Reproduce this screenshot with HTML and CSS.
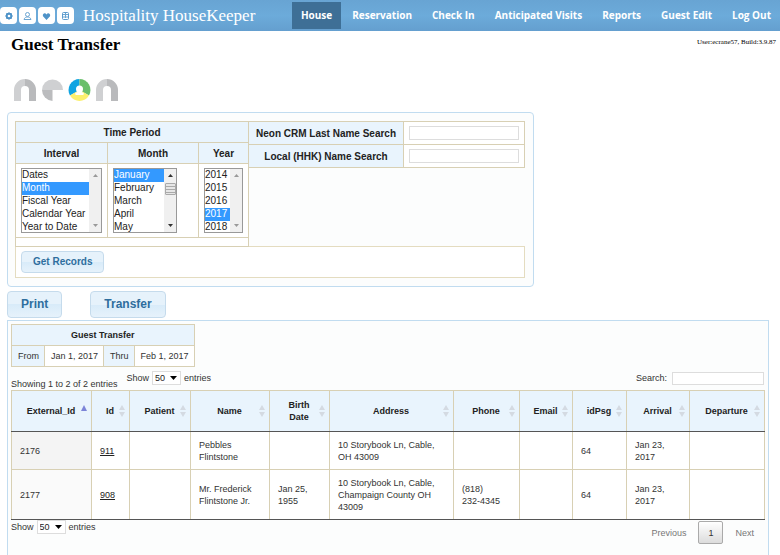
FILE: index.html
```html
<!DOCTYPE html>
<html lang="en">
<head>
<meta charset="utf-8">
<title>Guest Transfer</title>
<link rel="stylesheet" href="styles.css">
</head>
<body>
<svg class="defs" width="0" height="0" aria-hidden="true">
  <symbol id="sort" viewBox="0 0 6 12"><path d="M3 0L6 5H0zM3 12L0 7H6z"/></symbol>
  <symbol id="tri-up" viewBox="0 0 5 3"><path d="M2.500 0L5 3H0z"/></symbol>
  <symbol id="tri-down" viewBox="0 0 7 4"><path d="M0 0H7L3.500 4z"/></symbol>
  <symbol id="tri-asc" viewBox="0 0 6 6"><path d="M3 0L6 6H0z"/></symbol>
</svg>
<header class="topbar">
  <div class="brand">
    <div class="badges">
      <svg class="badge" viewBox="0 0 17 17"><rect width="17" height="17" rx="4" fill="#fff"/><rect x="6" y="6" width="6" height="6" rx="1" fill="#4f93c8"/><path d="M9 5v8M5 9h8" stroke="#4f93c8"/><circle cx="9" cy="9" r="1.300" fill="#fff"/></svg>
      <svg class="badge" viewBox="0 0 17 17"><rect width="17" height="17" rx="4" fill="#fff"/><circle cx="8.500" cy="7.500" r="2" fill="none" stroke="#6ba5d2"/><path d="M5 12.500c.5-2 2-2.500 3.500-2.500s3 .5 3.500 2.500z" fill="none" stroke="#6ba5d2"/></svg>
      <svg class="badge" viewBox="0 0 17 17"><rect width="17" height="17" rx="4" fill="#fff"/><path d="M8.500 13L5 9.200C4 7 7 5 8.500 7.400 10 5 13 7 12 9.200z" fill="#4f93c8"/></svg>
      <svg class="badge" viewBox="0 0 17 17"><rect width="17" height="17" rx="4" fill="#fff"/><rect x="5.500" y="5.500" width="6" height="7" rx="1" fill="none" stroke="#5c9bcd"/><path d="M6 7.500h5M6 10h5M8.500 6v5" stroke="#6ba5d2"/></svg>
    </div>
    <span class="brand-name">Hospitality HouseKeeper</span>
  </div>
  <nav class="nav">
    <a class="nav-link active" href="#">House</a>
    <a class="nav-link" href="#">Reservation</a>
    <a class="nav-link" href="#">Check In</a>
    <a class="nav-link" href="#">Anticipated Visits</a>
    <a class="nav-link" href="#">Reports</a>
    <a class="nav-link" href="#">Guest Edit</a>
    <a class="nav-link" href="#">Log Out</a>
  </nav>
</header>
<div class="titlebar">
  <h1>Guest Transfer</h1>
  <span class="build">User:ecrane57, Build:3.9.87</span>
</div>
<main>
  <svg class="logo" viewBox="0 0 104 22" role="img" aria-label="neon">
    <path d="M0 22V11A11 11 0 0 1 11 0V7Q7 7 7 11V22z" fill="#cfd0d2"/>
    <path d="M11 0A11 11 0 0 1 22 11V22H15V11Q15 7 11 7z" fill="#b9babc"/>
    <path d="M28 11A10.500 10.500 0 0 1 49 11H38.500z" fill="#cfd0d2"/>
    <path d="M28 11H38.500V22A11 11 0 0 1 28 11z" fill="#bbbcbe"/>
    <path d="M65.500 11V0A11 11 0 0 0 56 16.500z" fill="#0fa4e2"/>
    <path d="M65.500 11V0A11 11 0 0 1 75 16.500z" fill="#6abf6b"/>
    <path d="M65.500 11L56 16.500A11 11 0 0 0 75 16.500z" fill="#fbf06e"/>
    <circle cx="65.500" cy="10" r="3.500" fill="#fff"/><path d="M61 15c1-3 8-3 9 0l-1 1h-7z" fill="#fff"/>
    <path d="M82 22V11A11 11 0 0 1 93 0V7Q89 7 89 11V22z" fill="#cfd0d2"/>
    <path d="M93 0A11 11 0 0 1 104 11V22H97V11Q97 7 93 7z" fill="#b9babc"/>
  </svg>

  <form class="panel filter">
    <div class="filter-top">
      <table class="grid period">
        <thead>
          <tr><th colspan="3">Time Period</th></tr>
          <tr><th><label for="interval">Interval</label></th><th class="month-col"><label for="month">Month</label></th><th><label for="year">Year</label></th></tr>
        </thead>
        <tbody>
          <tr>
            <td><div class="listbox idle">
              <select id="interval" class="w-interval" size="5"><option>Dates</option><option selected>Month</option><option>Fiscal Year</option><option>Calendar Year</option><option>Year to Date</option></select>
              <div class="track"><svg><use href="#tri-up"/></svg><svg><use href="#tri-down"/></svg></div>
            </div></td>
            <td><div class="listbox">
              <select id="month" class="w-month" size="5"><option selected>January</option><option>February</option><option>March</option><option>April</option><option>May</option><option>June</option><option>July</option><option>August</option><option>September</option><option>October</option><option>November</option><option>December</option></select>
              <div class="track"><svg><use href="#tri-up"/></svg><span class="thumb"></span><svg><use href="#tri-down"/></svg></div>
            </div></td>
            <td><div class="listbox idle">
              <select id="year" class="w-year" size="5"><option>2014</option><option>2015</option><option>2016</option><option selected>2017</option><option>2018</option></select>
              <div class="track"><svg><use href="#tri-up"/></svg><svg><use href="#tri-down"/></svg></div>
            </div></td>
          </tr>
          <tr class="spacer"><td colspan="3"></td></tr>
        </tbody>
      </table>
      <table class="grid names">
        <tr><th><label for="crm">Neon CRM Last Name Search</label></th><td><input id="crm" class="field" type="text"></td></tr>
        <tr><th><label for="local">Local (HHK) Name Search</label></th><td><input id="local" class="field" type="text"></td></tr>
      </table>
    </div>
    <div class="filter-actions"><button class="btn" type="button">Get Records</button></div>
  </form>

  <div class="actions">
    <button class="btn big" type="button">Print</button>
    <button class="btn big" type="button">Transfer</button>
  </div>

  <section class="panel results">
    <table class="grid range">
      <tr><th colspan="4">Guest Transfer</th></tr>
      <tr><td class="key">From</td><td>Jan 1, 2017</td><td class="key">Thru</td><td>Feb 1, 2017</td></tr>
    </table>
    <div class="tools">
      <span class="info">Showing 1 to 2 of 2 entries</span>
      <label class="length">Show <span class="pick"><select><option>50</option></select><svg><use href="#tri-down"/></svg></span> entries</label>
      <label class="search">Search: <input class="field" type="text"></label>
    </div>
    <table class="records">
      <colgroup><col class="c80"><col class="c38"><col class="c61"><col class="c79"><col class="c60"><col class="c124"><col class="c66"><col class="c53"><col class="c54"><col class="c63"><col class="c75"></colgroup>
      <thead><tr>
        <th><div class="head">External_Id<svg class="asc"><use href="#tri-asc"/></svg></div></th>
        <th><div class="head">Id<svg><use href="#sort"/></svg></div></th>
        <th><div class="head">Patient<svg><use href="#sort"/></svg></div></th>
        <th><div class="head">Name<svg><use href="#sort"/></svg></div></th>
        <th><div class="head">Birth<br>Date<svg><use href="#sort"/></svg></div></th>
        <th><div class="head">Address<svg><use href="#sort"/></svg></div></th>
        <th><div class="head">Phone<svg><use href="#sort"/></svg></div></th>
        <th><div class="head">Email<svg><use href="#sort"/></svg></div></th>
        <th><div class="head">idPsg<svg><use href="#sort"/></svg></div></th>
        <th><div class="head">Arrival<svg><use href="#sort"/></svg></div></th>
        <th><div class="head">Departure<svg><use href="#sort"/></svg></div></th>
      </tr></thead>
      <tbody>
        <tr><td class="sorted">2176</td><td><a href="#">911</a></td><td></td><td>Pebbles Flintstone</td><td></td><td>10 Storybook Ln, Cable, OH 43009</td><td></td><td></td><td>64</td><td>Jan 23, 2017</td><td></td></tr>
        <tr><td class="sorted">2177</td><td><a href="#">908</a></td><td></td><td>Mr. Frederick Flintstone Jr.</td><td>Jan 25, 1955</td><td>10 Storybook Ln, Cable, Champaign County OH 43009</td><td>(818)<br>232-4345</td><td></td><td>64</td><td>Jan 23, 2017</td><td></td></tr>
      </tbody>
    </table>
    <div class="footer">
      <label class="length">Show <span class="pick"><select><option>50</option></select><svg><use href="#tri-down"/></svg></span> entries</label>
      <div class="pager"><button type="button">Previous</button><button class="current" type="button">1</button><button type="button">Next</button></div>
    </div>
  </section>
</main>
</body>
</html>
```
FILE: styles.css
```css
* { box-sizing: border-box; }
body {
  margin: 0;
  min-height: 100vh;
  display: flex;
  flex-direction: column;
  background: #fff;
  color: #333;
  font-family: "Liberation Sans", Arial, sans-serif;
  font-size: 10px;
}
.defs { position: absolute; }
svg { display: block; }
button, input, select { font: inherit; color: inherit; margin: 0; }

/* Top bar */
.topbar {
  height: 31px;
  flex: none;
  display: flex;
  justify-content: space-between;
  align-items: center;
  background: linear-gradient(#68a4d3, #6cabda 50%, #649fcf);
  color: #fff;
}
.brand { display: flex; align-items: center; gap: 9px; }
.badges { display: flex; gap: 2px; }
.badge { width: 17px; height: 17px; }
.brand-name { font-family: "Liberation Serif", serif; font-size: 17px; line-height: 20px; }
.nav { display: flex; gap: 2px; }
.nav-link {
  padding: 0 9px;
  line-height: 27px;
  font-family: "Open Sans", "Noto Sans", sans-serif;
  font-size: 10px;
  font-weight: 700;
  color: #fff;
  text-decoration: none;
  white-space: nowrap;
}
.nav-link.active { background: #3e6f96; }

/* Title */
.titlebar { display: flex; justify-content: space-between; align-items: flex-start; padding: 4px 4px 0 11px; color: #000; font-family: "Liberation Serif", serif; }
h1 { margin: 0; font-size: 17px; line-height: 20px; }
.build { font-size: 7px; line-height: 14px; }

main { flex: 1; display: flex; flex-direction: column; align-items: flex-start; padding: 0 11px 0 7px; }
.logo { width: 104px; height: 22px; margin: 24px 0 11px 7px; }
.panel { border: 1px solid #c1dcf0; background: #fcfdfd; }

/* Shared table look */
.grid { border-collapse: collapse; background: #fff; }
.grid th, .grid td { border: 1px solid #d8d0b4; }
.grid th { background: #e9f4fd; color: #222; font-weight: 700; text-align: center; }
.field { border: 1px solid #ddd; border-radius: 0; background: #fff; padding: 0 2px; }

/* Filter form */
.filter { border-radius: 4px; padding: 8px 8px 8px 7px; }
.filter-top { display: flex; align-items: flex-start; }
.period th { height: 21px; padding: 0 5px; }
.period td { padding: 4px 5px; vertical-align: top; }
.month-col { width: 91px; }
.period .spacer td { height: 9px; padding: 0; }
.names { margin-left: -1px; }
.names th { height: 23px; padding: 0 7px; }
.names td { padding: 0 5px; }
.names .field { display: block; width: 110px; height: 14px; }
.filter-actions { border: 1px solid #e4dcc0; margin-top: -1px; padding: 4px 5px; background: #fff; }
.listbox { display: inline-flex; vertical-align: top; border: 1px solid #999; background: #fff; color: #222; }
.listbox select {
  height: 63px;
  border: 0;
  border-radius: 0;
  padding: 0;
  background: #fff;
  outline: 0;
  overflow: hidden;
  scrollbar-width: none;
}
.listbox option { min-height: 0; height: 13px; line-height: 13px; padding: 0; overflow: hidden; }
.listbox option:checked { background: #39f linear-gradient(#39f, #39f); color: #fff; -webkit-text-fill-color: #fff; }
.w-interval { width: 67px; }
.w-month { width: 50px; }
.w-year { width: 25px; }
.track { width: 12px; background: #f0f0f0; display: flex; flex-direction: column; align-items: center; justify-content: space-between; padding: 5px 0; fill: #333; }
.idle .track { fill: #999; }
.track svg { width: 5px; height: 3px; }
.thumb { width: 11px; height: 12px; margin: 6px 0 auto; border: 1px solid #aaa; border-radius: 1px; background: repeating-linear-gradient(#e6e6e6 0 2px, #aaa 2px 3px); }

/* Buttons */
.btn { border: 1px solid #c5dbec; border-radius: 4px; background: linear-gradient(#e6f2fb 50%, #d8ebf9 50%, #e6f2fb); color: #2e6e9e; font-weight: 700; line-height: 12px; padding: 4px 11px; }
.btn.big { font-size: 12px; line-height: 15px; padding: 5px 13px; }
.actions { display: flex; gap: 28px; margin: 4px 0 2px; }

/* Results */
.results { flex: 1; align-self: stretch; border-bottom: 0; padding: 3px 4px 8px 3px; font-size: 9px; }
.range th { height: 21px; }
.range td { height: 21px; padding: 0 5px 0 6px; white-space: nowrap; }
.range .key { background: #e9f4fd; }
.tools { display: flex; align-items: flex-start; gap: 9px; padding-top: 4px; height: 23px; }
.info { line-height: 12px; align-self: flex-end; }
.length { display: flex; align-items: center; gap: 3px; height: 14px; }
.pick { display: flex; align-items: center; position: relative; border: 1px solid #ddd; background: #fff; }
.pick select { appearance: none; border: 0; background: none; width: 27px; height: 12px; padding: 0 2px; color: #222; }
.pick svg { position: absolute; right: 3px; width: 7px; height: 4px; fill: #000; pointer-events: none; }
.search { display: flex; align-items: center; gap: 5px; margin-left: auto; height: 14px; }
.search .field { width: 92px; height: 13px; }

.records { width: 100%; table-layout: fixed; border-collapse: collapse; background: #fff; line-height: 12px; }
.c80 { width: 80px; }
.c38 { width: 38px; }
.c61 { width: 61px; }
.c79 { width: 79px; }
.c60 { width: 60px; }
.c124 { width: 124px; }
.c66 { width: 66px; }
.c53 { width: 53px; }
.c54 { width: 54px; }
.c63 { width: 63px; }
.c75 { width: 75px; }
.records th, .records td { border: 1px solid #d8d0b4; }
.records th { height: 41px; padding: 0; background: #e9f4fd; color: #222; border-bottom-color: #555; }
.records td { padding: 7px 8px 6px; text-align: left; }
.records tbody tr:last-child td { border-bottom-color: #555; }
.records .sorted { background: #f4f4f4; }
.records tr:last-child .sorted { background: #fafafa; }
.records a { color: #222; }
.head { position: relative; padding: 0 10px 0 9px; }
.head svg { position: absolute; right: 4px; top: calc(50% - 6px); width: 6px; height: 12px; fill: #d4dae2; }
.head .asc { height: 6px; fill: #7c84d8; }
.footer { display: flex; justify-content: space-between; align-items: flex-start; }
.pager { display: flex; gap: 2px; padding-top: 1px; }
.pager button { height: 23px; padding: 0 9px; border: 1px solid transparent; border-radius: 2px; background: none; color: #777; }
.pager .current { border-color: #aaa; background: linear-gradient(#fff, #dcdcdc); color: #333; }
```
